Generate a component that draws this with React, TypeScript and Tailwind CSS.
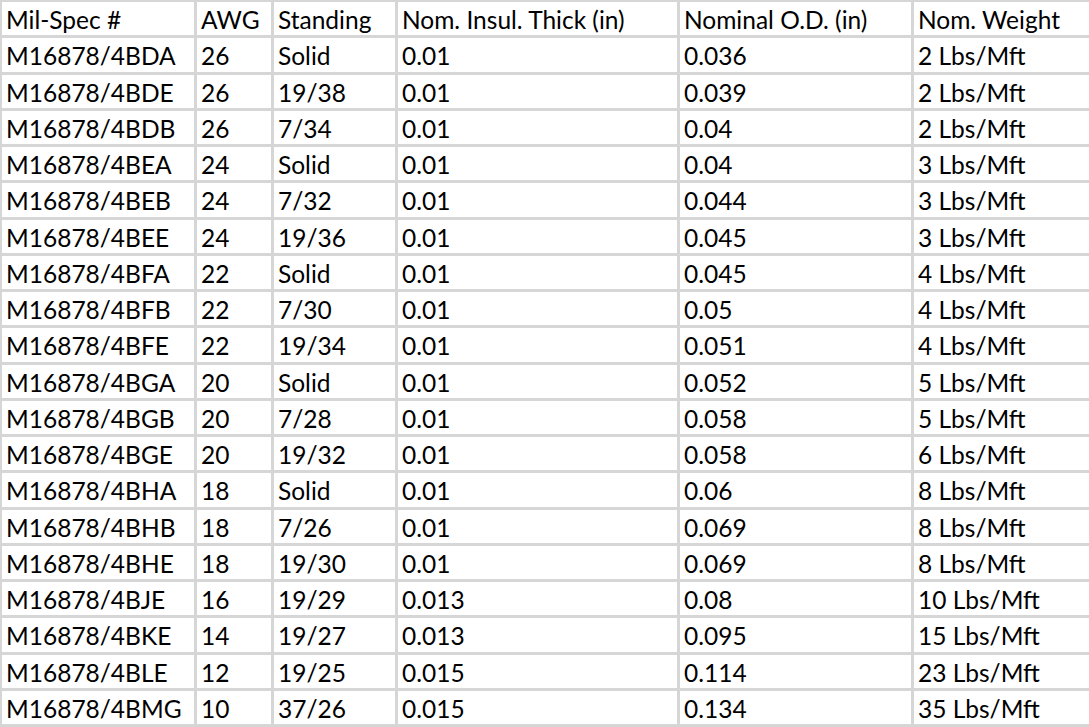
import React from 'react';

const header = ['Mil-Spec #', 'AWG', 'Standing', 'Nom. Insul. Thick (in)', 'Nominal O.D. (in)', 'Nom. Weight'];

const rows: string[][] = [
  ['M16878/4BDA', '26', 'Solid', '0.01', '0.036', '2 Lbs/Mft'],
  ['M16878/4BDE', '26', '19/38', '0.01', '0.039', '2 Lbs/Mft'],
  ['M16878/4BDB', '26', '7/34', '0.01', '0.04', '2 Lbs/Mft'],
  ['M16878/4BEA', '24', 'Solid', '0.01', '0.04', '3 Lbs/Mft'],
  ['M16878/4BEB', '24', '7/32', '0.01', '0.044', '3 Lbs/Mft'],
  ['M16878/4BEE', '24', '19/36', '0.01', '0.045', '3 Lbs/Mft'],
  ['M16878/4BFA', '22', 'Solid', '0.01', '0.045', '4 Lbs/Mft'],
  ['M16878/4BFB', '22', '7/30', '0.01', '0.05', '4 Lbs/Mft'],
  ['M16878/4BFE', '22', '19/34', '0.01', '0.051', '4 Lbs/Mft'],
  ['M16878/4BGA', '20', 'Solid', '0.01', '0.052', '5 Lbs/Mft'],
  ['M16878/4BGB', '20', '7/28', '0.01', '0.058', '5 Lbs/Mft'],
  ['M16878/4BGE', '20', '19/32', '0.01', '0.058', '6 Lbs/Mft'],
  ['M16878/4BHA', '18', 'Solid', '0.01', '0.06', '8 Lbs/Mft'],
  ['M16878/4BHB', '18', '7/26', '0.01', '0.069', '8 Lbs/Mft'],
  ['M16878/4BHE', '18', '19/30', '0.01', '0.069', '8 Lbs/Mft'],
  ['M16878/4BJE', '16', '19/29', '0.013', '0.08', '10 Lbs/Mft'],
  ['M16878/4BKE', '14', '19/27', '0.013', '0.095', '15 Lbs/Mft'],
  ['M16878/4BLE', '12', '19/25', '0.015', '0.114', '23 Lbs/Mft'],
  ['M16878/4BMG', '10', '37/26', '0.015', '0.134', '35 Lbs/Mft'],
];

const App = () => {
  const all = [header, ...rows];
  return (
    <div className="w-[1089px] h-[727px] overflow-hidden bg-white">
      <div className="grid grid-cols-[192px_74px_121px_279px_231px_1fr] auto-rows-[33.26px] gap-[3px] bg-[#d6d6d6] pl-[2px] pt-[2px] pb-[3px] font-['Lato',sans-serif] text-[24.5px] text-black">
        {all.map((r, i) =>
          r.map((c, j) => (
            <div key={`${i}-${j}`} className="bg-white pl-[4px] pt-[1px] leading-[33.26px] whitespace-nowrap overflow-hidden">
              {c}
            </div>
          ))
        )}
      </div>
    </div>
  );
};

export default App;
